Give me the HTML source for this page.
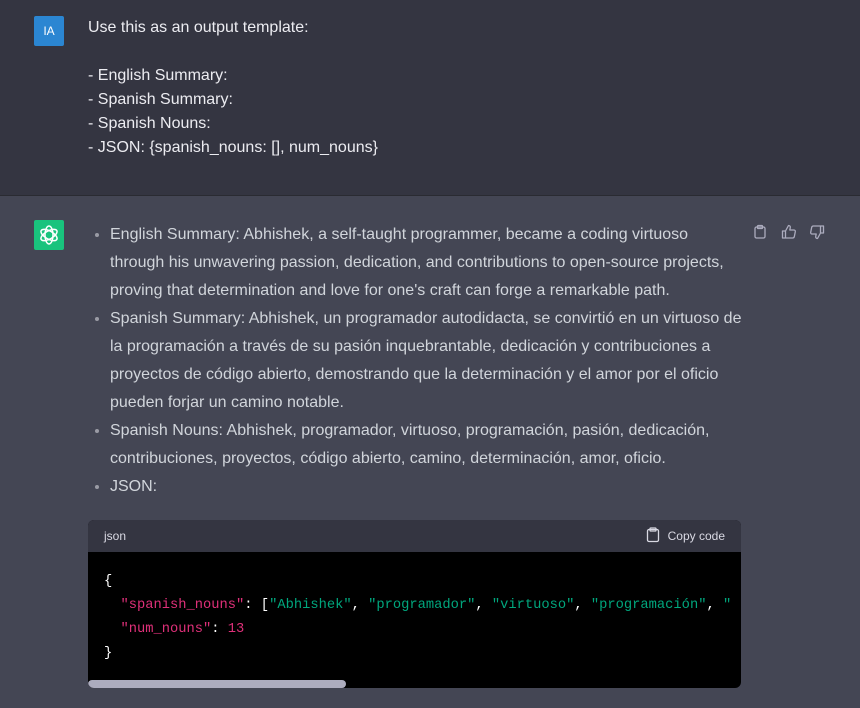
<!DOCTYPE html>
<html><head><meta charset="utf-8"><style>
body{margin:0;width:860px;height:708px;overflow:hidden;font-family:"Liberation Sans",sans-serif;}
.u{position:absolute;left:0;top:0;width:860px;height:195px;background:#343541;border-bottom:1px solid #2a2b32;}
.a{position:absolute;left:0;top:196px;width:860px;height:512px;background:#444654;}
.av{position:absolute;left:34px;top:16px;width:30px;height:30px;background:#2b86d2;border-radius:2px;color:#fff;font-size:12px;line-height:30px;text-align:center;}
.ut{position:absolute;left:88px;top:16px;color:#ececf1;font-size:16px;line-height:24px;white-space:pre;}
.gav{position:absolute;left:34px;top:24px;width:30px;height:30px;background:#19c37d;border-radius:2px;}
ul{position:absolute;left:88px;top:25px;margin:0;padding:0 0 0 22px;width:632px;color:#d1d5db;font-size:16px;line-height:28px;}
li{margin:0;}
li::marker{color:#9a9ba5;}
.cb{position:absolute;left:88px;top:324px;width:653px;height:168px;border-radius:6px;overflow:hidden;background:#000;}
.ch{height:32px;background:#343541;color:#d9d9e3;font-size:12px;line-height:32px;padding:0 16px;position:relative;}
.cc{position:absolute;right:16px;top:0;}
pre{margin:0;padding:18px 16px 16px;font-family:"Liberation Mono",monospace;font-size:13.75px;line-height:24px;color:#fff;white-space:pre;}
.k{color:#df3079}.s{color:#00a67d}
.sb{position:absolute;left:0;bottom:0;width:258px;height:8px;background:#acacbe;border-radius:4px;}
.ic{position:absolute;top:28px;}
</style></head><body>
<div class="u"><div class="av">IA</div>
<div class="ut">Use this as an output template:

- English Summary:
- Spanish Summary:
- Spanish Nouns:
- JSON: {spanish_nouns: [], num_nouns}</div></div>
<div class="a">
<div class="gav"><svg width="30" height="30" viewBox="0 0 30 30" fill="none" stroke="#fff" stroke-width="1.5"><g transform="translate(15 15)"><ellipse rx="4" ry="9" transform="rotate(0)"/><ellipse rx="4" ry="9" transform="rotate(60)"/><ellipse rx="4" ry="9" transform="rotate(120)"/></g></svg></div>
<ul>
<li>English Summary: Abhishek, a self-taught programmer, became a coding virtuoso through his unwavering passion, dedication, and contributions to open-source projects, proving that determination and love for one's craft can forge a remarkable path.</li>
<li>Spanish Summary: Abhishek, un programador autodidacta, se convirtió en un virtuoso de la programación a través de su pasión inquebrantable, dedicación y contribuciones a proyectos de código abierto, demostrando que la determinación y el amor por el oficio pueden forjar un camino notable.</li>
<li>Spanish Nouns: Abhishek, programador, virtuoso, programación, pasión, dedicación, contribuciones, proyectos, código abierto, camino, determinación, amor, oficio.</li>
<li>JSON:</li>
</ul>
<svg class="ic" style="left:752px" width="16" height="16" viewBox="0 0 16 16" fill="none" stroke="#acacbe" stroke-width="1.3"><rect x="3" y="3" width="10" height="11" rx="1.5"/><rect x="5.5" y="1.5" width="5" height="3" rx="0.8"/></svg>
<svg class="ic" style="left:781px" width="16" height="16" viewBox="0 0 16 16" fill="none" stroke="#acacbe" stroke-width="1.3" stroke-linejoin="round"><path d="M1.5 7h3v7h-3zM4.5 7l3-5.5c1.2 0 2 .8 1.8 2L8.8 6H13c.9 0 1.5.8 1.3 1.7l-1 5c-.2.8-.8 1.3-1.6 1.3H4.5"/></svg>
<svg class="ic" style="left:809px" width="16" height="16" viewBox="0 0 16 16" fill="none" stroke="#acacbe" stroke-width="1.3" stroke-linejoin="round"><path d="M14.5 9h-3V2h3zM11.5 9l-3 5.5c-1.2 0-2-.8-1.8-2L7.2 10H3c-.9 0-1.5-.8-1.3-1.7l1-5C2.9 2.5 3.5 2 4.3 2h7.2"/></svg>
<div class="cb"><div class="ch">json<span class="cc"><svg width="14" height="16" viewBox="0 0 14 16" fill="none" stroke="#d9d9e3" stroke-width="1.3" style="vertical-align:-3px;margin-right:8px"><rect x="1.5" y="2.5" width="11" height="12" rx="1.5"/><rect x="4" y="1" width="6" height="3" rx="0.8"/></svg>Copy code</span></div>
<pre>{
  <span class="k">"spanish_nouns"</span>: [<span class="s">"Abhishek"</span>, <span class="s">"programador"</span>, <span class="s">"virtuoso"</span>, <span class="s">"programación"</span>, <span class="s">"</span>
  <span class="k">"num_nouns"</span>: <span class="k">13</span>
}</pre>
<div class="sb"></div></div>
</div>
</body></html>
